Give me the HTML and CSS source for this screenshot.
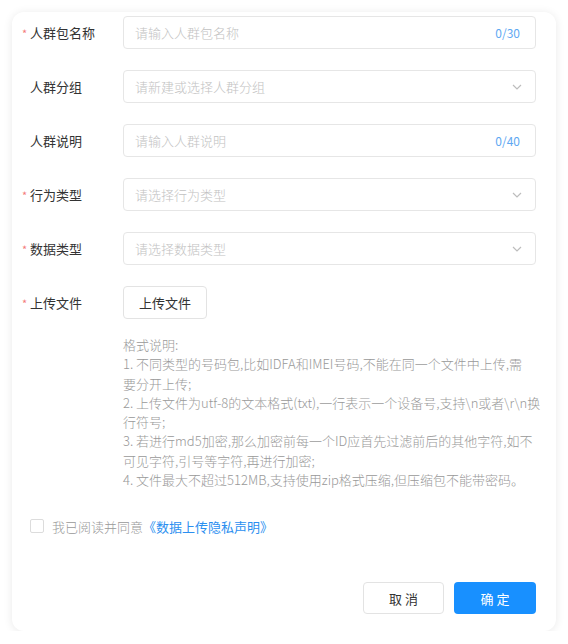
FILE: index.html
```html
<!DOCTYPE html>
<html lang="zh-CN">
<head>
<meta charset="utf-8">
<link rel="stylesheet" href="styles.css">
</head>
<body>
<div class="card">
  <div class="row">
    <div class="label"><span class="req">*</span>人群包名称</div>
    <div class="input"><span class="ph">请输入人群包名称</span><span class="count">0/30</span></div>
  </div>
  <div class="row">
    <div class="label"><span class="req"></span>人群分组</div>
    <div class="input"><span class="ph">请新建或选择人群分组</span><svg class="chev" width="10" height="6" viewBox="0 0 10 6"><path d="M1 1l4 4 4-4" fill="none" stroke="#bdbdbd" stroke-width="1.2"/></svg></div>
  </div>
  <div class="row">
    <div class="label"><span class="req"></span>人群说明</div>
    <div class="input"><span class="ph">请输入人群说明</span><span class="count">0/40</span></div>
  </div>
  <div class="row">
    <div class="label"><span class="req">*</span>行为类型</div>
    <div class="input"><span class="ph">请选择行为类型</span><svg class="chev" width="10" height="6" viewBox="0 0 10 6"><path d="M1 1l4 4 4-4" fill="none" stroke="#bdbdbd" stroke-width="1.2"/></svg></div>
  </div>
  <div class="row">
    <div class="label"><span class="req">*</span>数据类型</div>
    <div class="input"><span class="ph">请选择数据类型</span><svg class="chev" width="10" height="6" viewBox="0 0 10 6"><path d="M1 1l4 4 4-4" fill="none" stroke="#bdbdbd" stroke-width="1.2"/></svg></div>
  </div>
  <div class="row upload-row">
    <div class="label"><span class="req">*</span>上传文件</div>
    <div class="btn-upload">上传文件</div>
  </div>
  <div class="desc">
    <div>格式说明:</div>
    <div>1. 不同类型的号码包,比如IDFA和IMEI号码,不能在同一个文件中上传,需</div>
    <div>要分开上传;</div>
    <div>2. 上传文件为utf-8的文本格式(txt),一行表示一个设备号,支持\n或者\r\n换</div>
    <div>行符号;</div>
    <div>3. 若进行md5加密,那么加密前每一个ID应首先过滤前后的其他字符,如不</div>
    <div>可见字符,引号等字符,再进行加密;</div>
    <div>4. 文件最大不超过512MB,支持使用zip格式压缩,但压缩包不能带密码。</div>
  </div>
  <div class="agree">
    <span class="box"></span>
    <span class="agree-text">我已阅读并同意</span><span class="link">《数据上传隐私声明》</span>
  </div>
  <div class="footer">
    <div class="btn btn-cancel">取 消</div>
    <div class="btn btn-ok">确 定</div>
  </div>
</div>
</body>
</html>
```
FILE: styles.css
```css
* { box-sizing: border-box; }
html, body { margin: 0; padding: 0; background: #fff; }
body {
  font-family: "Noto Sans CJK SC", "Noto Sans", "Liberation Sans", sans-serif;
  font-size: 13px;
  font-weight: 300;
  color: #333;
}
.card {
  margin: 12px 0 0 12px;
  width: 544px;
  height: 619px;
  background: #fff;
  border-radius: 12px;
  box-shadow: 0 1px 10px rgba(0,0,0,0.09);
  padding: 4px 20px 17px 10px;
  display: flex;
  flex-direction: column;
}
.row {
  display: flex;
  align-items: center;
  height: 33px;
  margin-bottom: 21px;
}
.label {
  width: 101px;
  flex: none;
  display: flex;
  align-items: center;
  color: #333;
  font-weight: 400;
}
.req {
  width: 8px;
  flex: none;
  color: #f47b7b;
  font-size: 11px;
  line-height: 1;
  position: relative;
  top: 1px;
}
.input {
  flex: 1;
  height: 33px;
  border: 1px solid #e6e6e6;
  border-radius: 4px;
  display: flex;
  align-items: center;
  justify-content: space-between;
  padding: 0 15px 0 11px;
}
.ph { color: #c2c2c2; }
.count { color: #5ea8f2; font-size: 12px; font-weight: 400; }
.chev { margin-right: -2px; }
.upload-row { margin-bottom: 16px; }
.btn-upload {
  width: 84px;
  height: 33px;
  border: 1px solid #e3e3e3;
  border-radius: 4px;
  display: flex;
  align-items: center;
  justify-content: center;
  color: #333;
  font-weight: 400;
}
.desc {
  margin-left: 101px;
  color: #999;
  line-height: 19.3px;
  white-space: nowrap;
}
.agree {
  display: flex;
  align-items: center;
  margin-top: 27px;
  margin-left: 8px;
  height: 20px;
}
.box {
  width: 14px;
  height: 14px;
  border: 1px solid #dcdcdc;
  border-radius: 2px;
  margin-right: 8px;
}
.agree-text { color: #999; }
.link { color: #2b8ff0; font-weight: 400; }
.footer {
  margin-top: auto;
  display: flex;
  justify-content: flex-end;
  gap: 10px;
}
.btn {
  height: 32px;
  border-radius: 4px;
  display: flex;
  align-items: center;
  justify-content: center;
  font-size: 13px;
  font-weight: 400;
}
.btn-cancel {
  width: 81px;
  border: 1px solid #e3e3e3;
  color: #333;
}
.btn-ok {
  width: 82px;
  background: #1890ff;
  color: #fff;
}
```
